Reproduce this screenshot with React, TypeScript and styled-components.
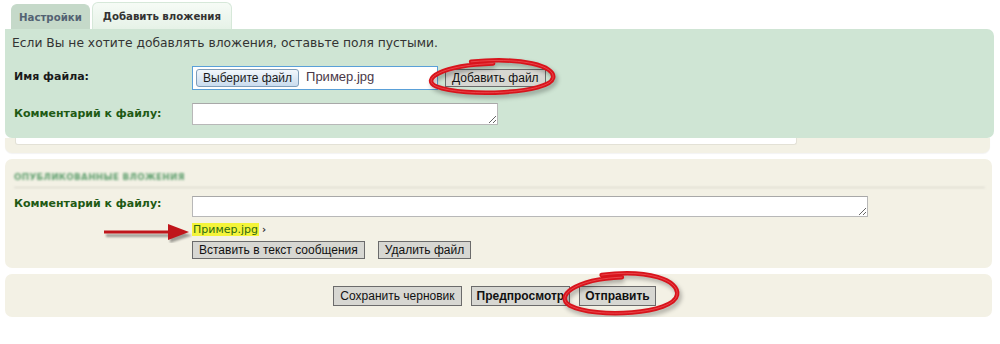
import styled, { createGlobalStyle } from "styled-components";

const GlobalStyle = createGlobalStyle`
  body {
    margin: 0;
    background: #fff;
    font-family: "DejaVu Sans", Verdana, sans-serif;
    color: #333;
  }
`;

const Page = styled.div`
  width: 989px;
  padding: 3px 0 0 5px;
`;

const TabBar = styled.div`
  display: flex;
  align-items: flex-end;
  gap: 2px;
  height: 26px;
  padding-left: 6px;
`;

const Tab = styled.div<{ $active?: boolean }>`
  height: ${(p) => (p.$active ? 26 : 24)}px;
  padding: 0 ${(p) => (p.$active ? 10 : 7)}px;
  display: flex;
  align-items: center;
  border-radius: 6px 6px 0 0;
  font-size: 10.2px;
  font-weight: bold;
  color: ${(p) => (p.$active ? "#333" : "#536273")};
  background: ${(p) =>
    p.$active ? "linear-gradient(#f6fbf6, #e6f2e7)" : "#c5d9c9"};
  border: 1px solid ${(p) => (p.$active ? "#d6e8d9" : "#c5d9c9")};
  border-bottom: none;
`;

const AttachPanel = styled.div`
  background: #cfe5d4;
  border-radius: 0 7px 7px 7px;
  padding: 6px 7px 13px 7px;
`;

const Intro = styled.p`
  margin: 0 0 15px 0;
  font-size: 12.3px;
  line-height: 16px;
  color: #333;
`;

const FormRows = styled.div<{ $gap: number }>`
  display: grid;
  grid-template-columns: 180px 1fr;
  row-gap: ${(p) => p.$gap}px;
  align-items: start;
`;

const Label = styled.label<{ $green?: boolean; $top?: number }>`
  padding: ${(p) => p.$top ?? 3}px 0 0 2px;
  font-size: 11px;
  font-weight: bold;
  color: ${(p) => (p.$green ? "#1f5a14" : "#1a1a1a")};
`;

const FileLine = styled.div`
  display: flex;
  align-items: center;
  gap: 7px;
`;

const FileBox = styled.div`
  width: 238px;
  height: 22px;
  display: flex;
  align-items: center;
  gap: 7px;
  padding: 0 3px;
  background: #fff;
  border: 1px solid #5aa0d8;
  box-sizing: content-box;
`;

const ChooseButton = styled.span`
  height: 16px;
  padding: 0 6px;
  display: flex;
  align-items: center;
  border: 1px solid #7f9db9;
  border-radius: 3px;
  background: linear-gradient(#f2f7fc, #cadcee);
  font-family: "Liberation Sans", Arial, sans-serif;
  font-size: 12px;
  color: #1b1b1b;
`;

const FileName = styled.span`
  font-family: "Liberation Sans", Arial, sans-serif;
  font-size: 13px;
  color: #4a3848;
  margin-top: -4px;
`;

const Marked = styled.span`
  position: relative;
  display: inline-flex;
`;

const Ring = styled.svg`
  position: absolute;
  pointer-events: none;
  overflow: visible;
`;

const OldButton = styled.button<{ $bold?: boolean; $h?: number }>`
  height: ${(p) => p.$h ?? 18}px;
  padding: 0 ${(p) => (p.$bold ? 5 : 6)}px;
  border: 1px solid #6b6b6b;
  background-color: #e6e6e2;
  background-image: radial-gradient(#c4c4c0 0.6px, transparent 0.8px);
  background-size: 2px 2px;
  font-family: "Liberation Sans", Arial, sans-serif;
  font-size: 12px;
  font-weight: ${(p) => (p.$bold ? "bold" : "normal")};
  color: #111;
  cursor: pointer;
  white-space: nowrap;
`;

const TextArea = styled.textarea<{ $w: number; $h: number }>`
  width: ${(p) => p.$w}px;
  height: ${(p) => p.$h}px;
  box-sizing: border-box;
  margin: 0;
  border: 1px solid #b8b8b8;
  border-top-color: #a8a8a8;
  background: #fff;
  display: block;
`;

const DraftTail = styled.div`
  height: 15px;
  margin-right: 4px;
  padding-left: 10px;
  background: #f3f1e5;
  border-radius: 0 0 7px 7px;
  box-shadow: 0 1px 1px rgba(0, 0, 0, 0.05);
`;

const TailField = styled.div`
  width: 780px;
  height: 6px;
  background: #fff;
  border: 1px solid #e3e1d6;
  border-top: none;
  border-radius: 0 0 3px 3px;
`;

const Panel = styled.div<{ $top: number }>`
  margin: ${(p) => p.$top}px 2px 0 0;
  background: #f3f1e5;
  border-radius: 7px;
`;

const Posted = styled(Panel)`
  padding: 13px 7px 9px 7px;
`;

const Heading = styled.h3`
  margin: 0 0 8px 2px;
  padding-bottom: 4px;
  border-bottom: 1px solid #d6d4ca;
  font-size: 8.8px;
  line-height: 11px;
  font-weight: bold;
  letter-spacing: 0.3px;
  text-transform: uppercase;
  color: #5f9f6e;
  filter: blur(0.8px);
`;

const ArrowCell = styled.div`
  display: flex;
  justify-content: flex-end;
`;

const AttachLink = styled.div`
  display: flex;
  align-items: center;
  gap: 3px;
  font-size: 11px;
  color: #2d6a12;
  height: 13px;
`;

const Highlight = styled.span`
  background: #f4f43a;
  padding: 0 1px;
  line-height: 13px;
`;

const Chevron = styled.span`
  font-size: 10px;
  font-weight: bold;
  color: #333;
`;

const ButtonRow = styled.div<{ $gap: number }>`
  display: flex;
  gap: ${(p) => p.$gap}px;
  margin-top: 5px;
`;

const Submit = styled(Panel)`
  height: 43px;
  display: flex;
  align-items: center;
  justify-content: center;
  gap: 9px;
  padding-right: 8px;
`;

function RedLoop({ w, h, left, top }: { w: number; h: number; left: number; top: number }) {
  const cx = w / 2;
  const cy = h / 2;
  const rx = w / 2 - 4;
  const ry = h / 2 - 4;
  const d = `M ${cx - rx * 0.3} ${cy - ry * 0.95}
    C ${cx + rx * 0.5} ${cy - ry * 1.25}, ${cx + rx * 1.05} ${cy - ry * 0.7}, ${cx + rx} ${cy}
    C ${cx + rx * 0.95} ${cy + ry * 0.9}, ${cx - rx * 0.4} ${cy + ry * 1.15}, ${cx - rx * 0.85} ${cy + ry * 0.5}
    C ${cx - rx * 1.1} ${cy + ry * 0.1}, ${cx - rx * 0.8} ${cy - ry * 0.75}, ${cx + rx * 0.05} ${cy - ry * 0.85}`;
  return (
    <Ring width={w} height={h} style={{ left, top }} viewBox={`0 0 ${w} ${h}`}>
      <path d={d} fill="none" stroke="rgba(0,0,0,0.28)" strokeWidth="5" transform="translate(2 3)" style={{ filter: "blur(2px)" }} />
      <path d={d} fill="none" stroke="#d8141c" strokeWidth="4.5" strokeLinecap="round" />
      <path d={d} fill="none" stroke="#f0585c" strokeWidth="1" strokeLinecap="round" opacity="0.7" />
    </Ring>
  );
}

function Arrow() {
  return (
    <svg width="92" height="20" viewBox="0 0 92 20">
      <g style={{ filter: "blur(1.2px)" }} opacity="0.35" transform="translate(2 3)">
        <rect x="4" y="8" width="68" height="3" fill="#000" />
        <polygon points="68,2 90,9.5 68,17" fill="#000" />
      </g>
      <rect x="4" y="7.5" width="68" height="3" fill="#c0161b" />
      <polygon points="68,1 89,9 68,17" fill="#c0161b" />
    </svg>
  );
}

export default function App() {
  return (
    <>
      <GlobalStyle />
      <Page>
        <TabBar>
          <Tab>Настройки</Tab>
          <Tab $active>Добавить вложения</Tab>
        </TabBar>

        <AttachPanel>
          <Intro>Если Вы не хотите добавлять вложения, оставьте поля пустыми.</Intro>
          <FormRows $gap={13}>
            <Label $top={4}>Имя файла:</Label>
            <FileLine>
              <FileBox>
                <ChooseButton>Выберите файл</ChooseButton>
                <FileName>Пример.jpg</FileName>
              </FileBox>
              <Marked>
                <OldButton $h={18}>Добавить файл</OldButton>
                <RedLoop w={134} h={42} left={-22} top={-12} />
              </Marked>
            </FileLine>
            <Label $green $top={4}>Комментарий к файлу:</Label>
            <TextArea $w={306} $h={22} />
          </FormRows>
        </AttachPanel>

        <DraftTail>
          <TailField />
        </DraftTail>

        <Posted $top={6}>
          <Heading>Опубликованные вложения</Heading>
          <FormRows $gap={6}>
            <Label $green $top={1}>Комментарий к файлу:</Label>
            <TextArea $w={676} $h={21} />
            <ArrowCell>
              <Arrow />
            </ArrowCell>
            <div>
              <AttachLink>
                <Highlight>Пример.jpg</Highlight>
                <Chevron>›</Chevron>
              </AttachLink>
              <ButtonRow $gap={13}>
                <OldButton $h={18}>Вставить в текст сообщения</OldButton>
                <OldButton $h={18}>Удалить файл</OldButton>
              </ButtonRow>
            </div>
          </FormRows>
        </Posted>

        <Submit $top={6}>
          <OldButton $h={20}>Сохранить черновик</OldButton>
          <OldButton $h={20} $bold>Предпросмотр</OldButton>
          <Marked>
            <OldButton $h={20} $bold>Отправить</OldButton>
            <RedLoop w={124} h={50} left={-22} top={-16} />
          </Marked>
        </Submit>
      </Page>
    </>
  );
}
